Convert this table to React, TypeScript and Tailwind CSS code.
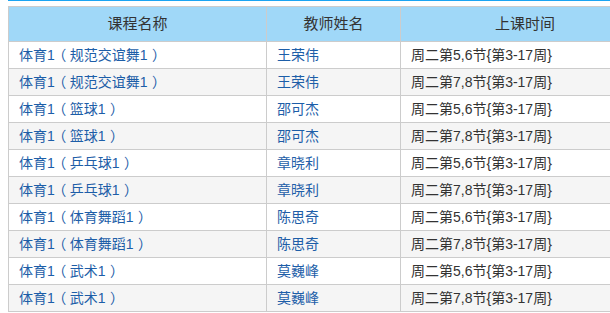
const rows = [
  ["体育1", "规范交谊舞1", "王荣伟", "周二第5,6节{第3-17周}"],
  ["体育1", "规范交谊舞1", "王荣伟", "周二第7,8节{第3-17周}"],
  ["体育1", "篮球1", "邵可杰", "周二第5,6节{第3-17周}"],
  ["体育1", "篮球1", "邵可杰", "周二第7,8节{第3-17周}"],
  ["体育1", "乒乓球1", "章晓利", "周二第5,6节{第3-17周}"],
  ["体育1", "乒乓球1", "章晓利", "周二第7,8节{第3-17周}"],
  ["体育1", "体育舞蹈1", "陈思奇", "周二第5,6节{第3-17周}"],
  ["体育1", "体育舞蹈1", "陈思奇", "周二第7,8节{第3-17周}"],
  ["体育1", "武术1", "莫巍峰", "周二第5,6节{第3-17周}"],
  ["体育1", "武术1", "莫巍峰", "周二第7,8节{第3-17周}"],
];

export default function App() {
  return (
    <div
      className="w-[610px] h-[313px] overflow-hidden bg-white"
      style={{ fontFamily: '"Liberation Sans", "Noto Sans CJK SC", sans-serif' }}
    >
      <div className="ml-2 h-px bg-[#1ba4f2]" />
      <div className="ml-2 mt-[5px] w-[640px]">
        <table className="w-full border-collapse table-fixed">
          <colgroup>
            <col className="w-[258px]" />
            <col className="w-[134px]" />
            <col />
          </colgroup>
          <thead>
            <tr className="h-[35px] bg-[#a0d8f8]">
              <th className="border border-[#cccccc] font-normal text-[15px] text-[#333333]">课程名称</th>
              <th className="border border-[#cccccc] font-normal text-[15px] text-[#333333]">教师姓名</th>
              <th className="border border-[#cccccc] font-normal text-[15px] text-[#333333] text-left pl-[94px]">上课时间</th>
            </tr>
          </thead>
          <tbody>
            {rows.map((r, i) => (
              <tr key={i} className={`h-[27px] ${i % 2 === 1 ? "bg-[#f5f5f5]" : "bg-white"}`}>
                <td className="border border-[#cccccc] px-[10px] text-[14px] text-[#1d5ea8] whitespace-nowrap">
                  {r[0]}
                  <span className="ml-[4px] mr-[4px] [font-feature-settings:'palt']">（</span>
                  {r[1]}
                  <span className="ml-[5px] [font-feature-settings:'palt']">）</span>
                </td>
                <td className="border border-[#cccccc] px-[10px] text-[14px] text-[#1d5ea8]">{r[2]}</td>
                <td className="border border-[#cccccc] px-[10px] text-[14px] text-[#333333]">{r[3]}</td>
              </tr>
            ))}
          </tbody>
        </table>
      </div>
    </div>
  );
}
